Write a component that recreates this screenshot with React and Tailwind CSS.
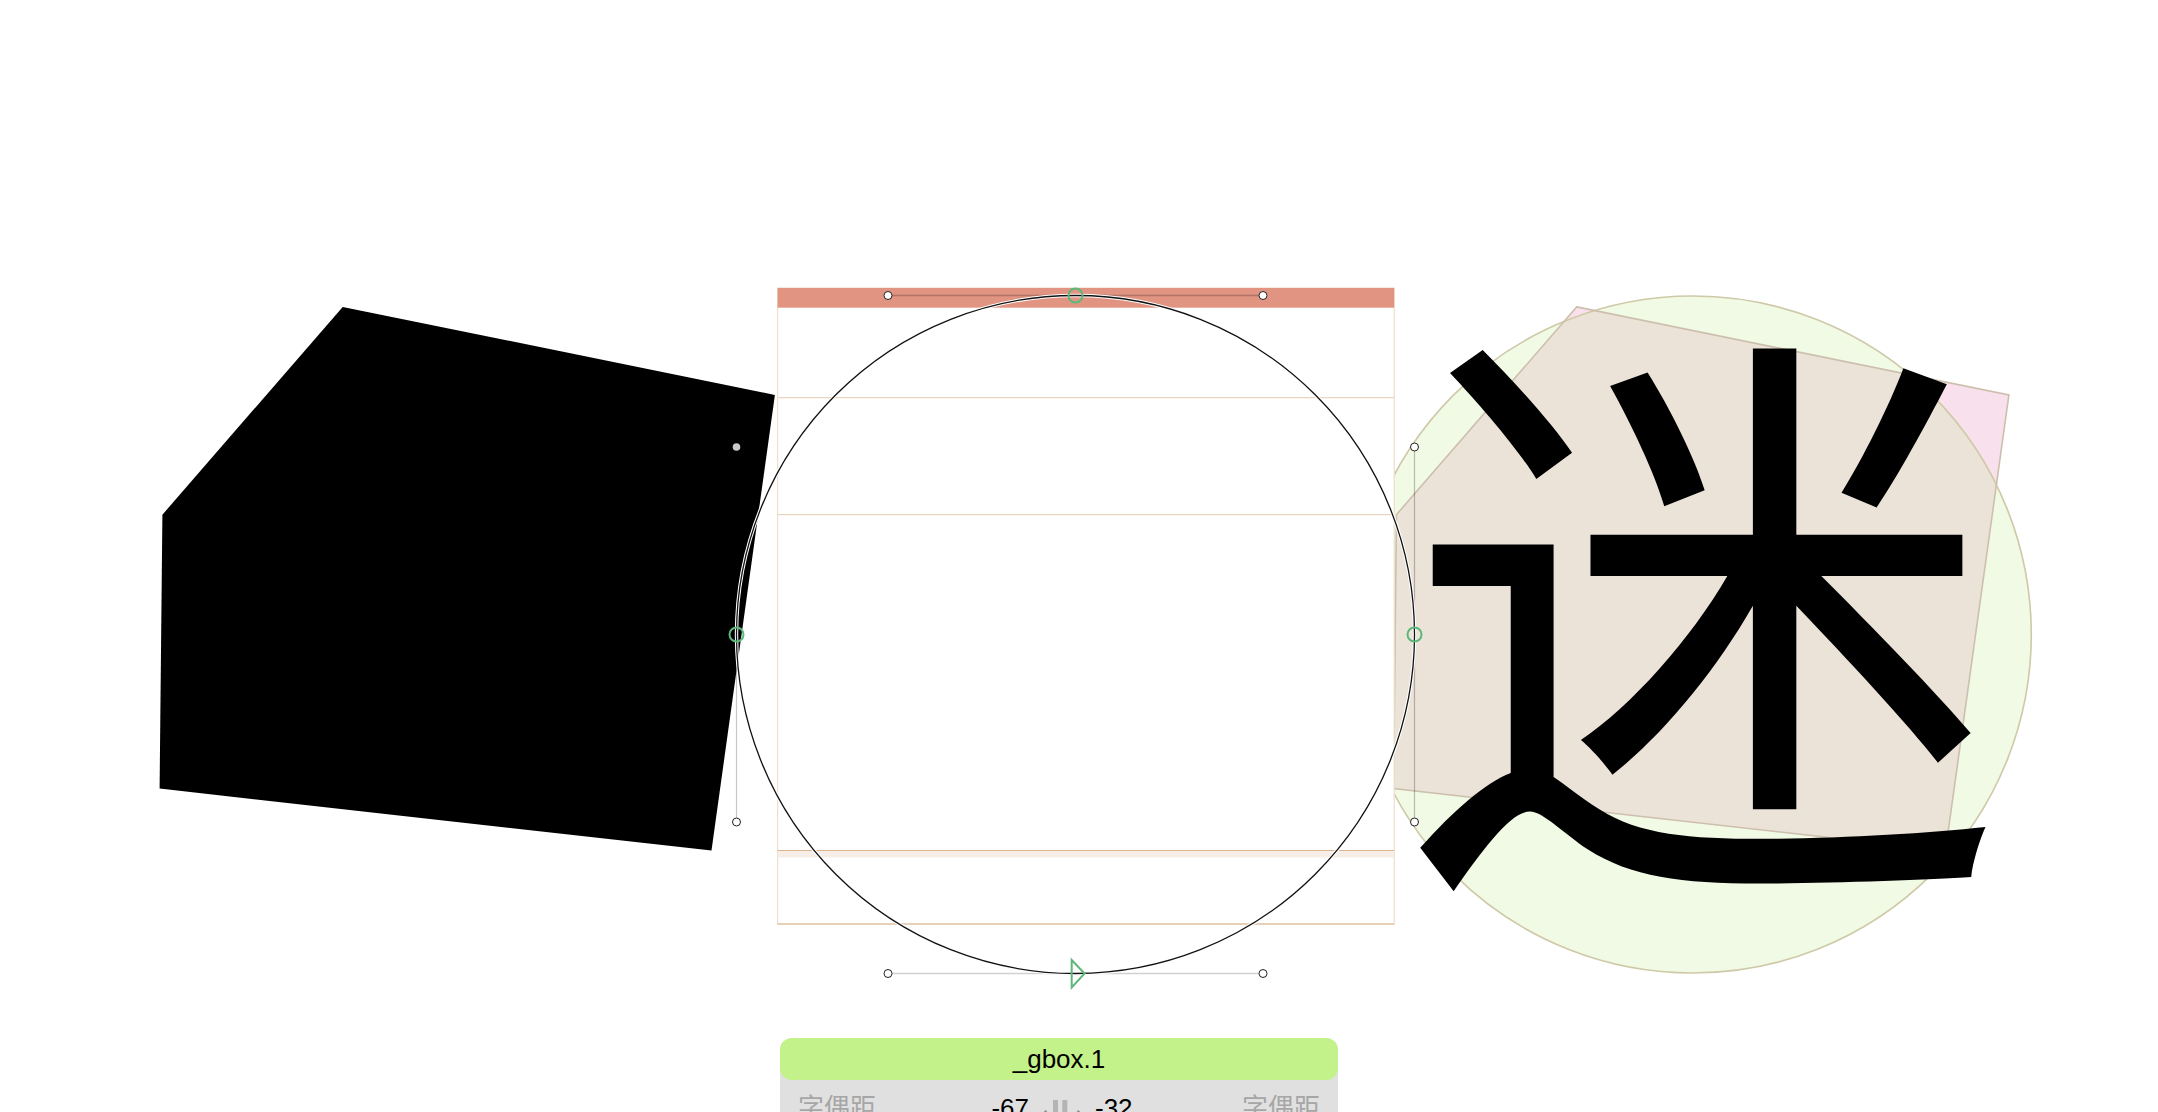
import React from 'react';

const BLACK_SHAPE = [
  [342.7, 306.9],
  [774.9, 395],
  [711.5, 850.5],
  [159.6, 788.6],
  [162.4, 514.7],
];

const pts = (list, dx = 0) => list.map(([x, y]) => `${x + dx},${y}`).join(' ');

function Handle({ x, y }) {
  return <circle cx={x} cy={y} r="4" fill="#fff" stroke="#222" strokeWidth="1" />;
}

function Node({ x, y }) {
  return <circle cx={x} cy={y} r="7" fill="none" stroke="#5cb87a" strokeWidth="2" />;
}

function GlyphCanvas() {
  const cx = 1075.5;
  const cy = 634.5;
  const r = 339;
  const k = 187.5;
  const pinkShape = pts(BLACK_SHAPE, 1234);

  return (
    <svg width="2158" height="1038" viewBox="0 0 2158 1038" className="block shrink-0">
      <defs>
        <clipPath id="gcircle">
          <circle cx="1692.8" cy="634.5" r="338.5" />
        </clipPath>
      </defs>

      {/* neighbour glyph: background circle + component */}
      <circle cx="1692.8" cy="634.5" r="338.5" fill="#f0fae4" />
      <polygon points={pinkShape} fill="#f8e0ec" />
      <polygon points={pinkShape} fill="#ece3d8" clipPath="url(#gcircle)" />
      <circle cx="1692.8" cy="634.5" r="338.5" fill="none" stroke="#cfc9a8" strokeWidth="1.6" />
      <polygon points={pinkShape} fill="none" stroke="#cdbfad" strokeWidth="1.6" />

      {/* metrics box of the current glyph */}
      <rect x="777.6" y="288" width="616.6" height="636" fill="#fff" stroke="#ecdecb" strokeWidth="1.2" />
      <rect x="777.6" y="288" width="616.6" height="19.7" fill="#e29482" />
      <line x1="777.6" y1="397.7" x2="1394.2" y2="397.7" stroke="#e9d5bf" strokeWidth="1.3" />
      <line x1="777.6" y1="514.7" x2="1394.2" y2="514.7" stroke="#e9d5bf" strokeWidth="1.3" />
      <rect x="777.6" y="850.5" width="616.6" height="7" fill="#f6eee7" />
      <line x1="777.6" y1="850.5" x2="1394.2" y2="850.5" stroke="#dcb690" strokeWidth="1.2" />
      <line x1="777.6" y1="924" x2="1394.2" y2="924" stroke="#dcb690" strokeWidth="1.2" />

      {/* previous glyph */}
      <polygon points={pts(BLACK_SHAPE)} fill="#000" />

      {/* handle lines */}
      <line x1={cx - k} y1={cy - r} x2={cx + k} y2={cy - r} stroke="rgba(0,0,0,0.22)" strokeWidth="1.3" />
      <line x1={cx - k} y1={cy + r} x2={cx + k} y2={cy + r} stroke="rgba(0,0,0,0.18)" strokeWidth="1.4" />
      <line x1={cx - r} y1={cy - k} x2={cx - r} y2={cy + k} stroke="rgba(0,0,0,0.22)" strokeWidth="1.2" />
      <line x1={cx + r} y1={cy - k} x2={cx + r} y2={cy + k} stroke="rgba(0,0,0,0.25)" strokeWidth="1.2" />

      {/* the outline */}
      <circle cx={cx} cy={cy} r={r} fill="none" stroke="#fff" strokeWidth="3.4" />
      <circle cx={cx} cy={cy} r={r} fill="none" stroke="#111" strokeWidth="1.3" />

      {/* off-curve points */}
      <Handle x={cx - k} y={cy - r} />
      <Handle x={cx + k} y={cy - r} />
      <Handle x={cx - k} y={cy + r} />
      <Handle x={cx + k} y={cy + r} />
      <circle cx={cx - r} cy={cy - k} r="3.8" fill="#c9c9c9" />
      <Handle x={cx - r} y={cy + k} />
      <Handle x={cx + r} y={cy - k} />
      <Handle x={cx + r} y={cy + k} />

      {/* on-curve points */}
      <Node x={cx} y={cy - r} />
      <Node x={cx - r} y={cy} />
      <Node x={cx + r} y={cy} />
      <polygon points="1071.7,960 1084.6,973.5 1071.7,987.5" fill="none" stroke="#5cb87a" strokeWidth="2" strokeLinejoin="miter" />

      {/* next glyph */}
      <text
        x="1406"
        y="842.5"
        fontSize="595"
        fontFamily="'Noto Sans CJK SC', 'Noto Sans CJK JP', sans-serif"
        fill="#000"
      >
        迷
      </text>
    </svg>
  );
}

function KernIcon() {
  return (
    <svg width="46" height="30" viewBox="0 0 46 30" className="shrink-0 mt-[6px]">
      <rect x="14" y="2" width="5" height="30" fill="#b4b4b4" />
      <rect x="23.3" y="2" width="5" height="30" fill="#b4b4b4" />
      <rect x="19" y="14.6" width="4.3" height="4.4" fill="#b4b4b4" />
      <path d="M13 16.7H3.5M7.5 12.6L3.2 16.7L7.5 20.8" fill="none" stroke="#8e8e8e" strokeWidth="2" />
      <path d="M29.5 16.7H42.5M38.5 12.6L42.8 16.7L38.5 20.8" fill="none" stroke="#8e8e8e" strokeWidth="2" />
    </svg>
  );
}

export default function App() {
  return (
    <div className="w-[2158px] h-[1112px] overflow-hidden bg-white flex flex-col font-['Liberation_Sans','Noto_Sans_CJK_SC',sans-serif]">
      <GlyphCanvas />
      <div className="pl-[780px]">
        <div className="w-[558px] rounded-[12px] bg-[#e0e0e0]">
          <div className="h-[42px] rounded-[12px] bg-[#c4f28a] flex items-center justify-center text-[26px] leading-[42px] text-black">
            _gbox.1
          </div>
          <div className="flex items-start justify-between px-[18px] pt-[12px] pb-[10px] text-[26px] leading-[32px]">
            <span className="text-[#a6a6a6]">字偶距</span>
            <div className="flex items-start gap-[10px] pl-[6px] text-black">
              <span>-67</span>
              <KernIcon />
              <span>-32</span>
            </div>
            <span className="text-[#a6a6a6]">字偶距</span>
          </div>
        </div>
      </div>
    </div>
  );
}
